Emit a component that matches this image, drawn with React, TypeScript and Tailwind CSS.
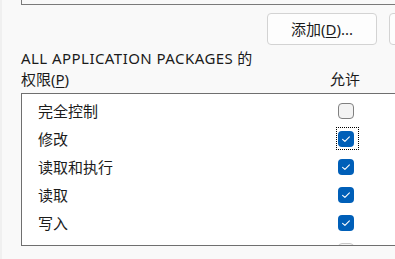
import React from 'react'

const rows = [
  { label: '完全控制', checked: false },
  { label: '修改', checked: true, focus: true },
  { label: '读取和执行', checked: true },
  { label: '读取', checked: true },
  { label: '写入', checked: true },
  { label: '', checked: false, disabled: true },
]

function Check({ checked, disabled, focus }: { checked: boolean; disabled?: boolean; focus?: boolean }) {
  return (
    <div className="relative w-[16px] h-[16px] shrink-0">
      {checked ? (
        <div className="w-full h-full rounded-[4px] bg-[#005fb8] flex items-center justify-center">
          <svg width="16" height="16" viewBox="0 0 16 16" fill="none">
            <path d="M4.6 8.3 L6.9 10.4 L11.4 5.8" stroke="#fff" strokeWidth="1.1" strokeLinecap="round" strokeLinejoin="round" />
          </svg>
        </div>
      ) : (
        <div className={`w-full h-full rounded-[4px] border ${disabled ? 'border-[#c8c8c8] bg-[#f5f5f5]' : 'border-[#808080] bg-[#f3f3f3]'}`} />
      )}
      {focus && (
        <div className="absolute -left-[2px] -right-[5px] -top-[4px] -bottom-[3px] border border-dotted border-black" />
      )}
    </div>
  )
}

export default function App() {
  return (
    <div
      className="w-[395px] h-[259px] overflow-hidden bg-[#f9f9f9] text-[#1b1b1b] text-[15px] border-l-2 border-[#f0f0f0]"
      style={{ fontFamily: '"Segoe UI", "Noto Sans", "Noto Sans CJK SC", sans-serif' }}
    >
      {/* box above, cut off */}
      <div className="h-[5px] ml-[19px] w-[500px] border-l border-b border-[#7a7a7a]" />

      <div className="flex gap-[12px] pl-[265px] mt-[8px]">
        <button className="w-[110px] h-[32px] shrink-0 rounded-[4px] border border-[#d3d3d3] bg-[#fdfdfd] text-[15px] flex items-center justify-center">
          添加(<span className="underline underline-offset-2">D</span>)...
        </button>
        <button className="w-[110px] h-[32px] shrink-0 rounded-[4px] border border-[#d3d3d3] bg-[#fdfdfd]" />
      </div>

      <div className="flex items-end mt-[3px] ml-[19px] leading-[21px]">
        <div className="w-[309px]">
          <div><span className="tracking-[0.45px]">ALL APPLICATION PACKAGES</span> 的</div>
          <div>权限(<span className="underline underline-offset-2">P</span>)</div>
        </div>
        <div>允许</div>
      </div>

      <div className="ml-[19px] mt-[3px] w-[500px] h-[153px] border-l border-t border-b border-[#6f6f6f] bg-white overflow-hidden pt-[3px]">
        {rows.map((r, i) => (
          <div key={i} className="flex items-center h-[28px]">
            <div className="w-[316px] pl-[16px] leading-none">{r.label}</div>
            <Check checked={r.checked} disabled={r.disabled} focus={r.focus} />
          </div>
        ))}
      </div>
    </div>
  )
}
